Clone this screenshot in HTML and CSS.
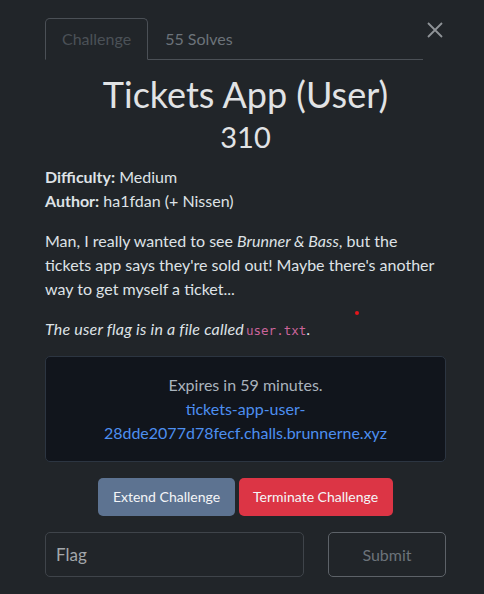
FILE: index.html
```html
<!DOCTYPE html>
<html>
<head>
<meta charset="utf-8">
<link rel="stylesheet" href="styles.css">
</head>
<body>
<div class="modal">
  <div class="header">
    <nav class="tabs">
      <span class="tab active">Challenge</span>
      <span class="tab">55 Solves</span>
    </nav>
    <button class="close" aria-label="Close">
      <svg width="16" height="16" viewBox="0 0 16 16"><path d="M1 1L15 15M15 1L1 15" stroke="#8f9397" stroke-width="1.8" fill="none"/></svg>
    </button>
  </div>
  <h2 class="title">Tickets App (User)</h2>
  <h3 class="points">310</h3>
  <div class="meta">
    <div><b>Difficulty:</b> Medium</div>
    <div><b>Author:</b> ha1fdan (+ Nissen)</div>
  </div>
  <p class="desc">Man, I really wanted to see <i>Brunner &amp; Bass</i>, but the tickets app says they're sold out! Maybe there's another way to get myself a ticket...</p>
  <p class="desc"><i class="note">The user flag is in a file called</i><code>user.txt</code>.</p>
  <div class="instance">
    <div class="expires">Expires in 59 minutes.</div>
    <a class="link" href="#">tickets-app-user-<br>28dde2077d78fecf.challs.brunnerne.xyz</a>
  </div>
  <div class="actions">
    <button class="btn extend">Extend Challenge</button>
    <button class="btn terminate">Terminate Challenge</button>
  </div>
  <form class="submit-row">
    <input class="flag" type="text" placeholder="Flag">
    <button class="submit" type="button">Submit</button>
  </form>
  <span class="dot"></span>
</div>
</body>
</html>
```
FILE: styles.css
```css
html, body {
  margin: 0;
  padding: 0;
  background: #212529;
}
body {
  font-family: Lato, "Open Sans", sans-serif;
  color: #dee2e6;
  font-size: 16px;
  line-height: 24px;
}
.modal {
  width: 484px;
  height: 594px;
  box-sizing: border-box;
  padding: 18px 38px 0 45px;
  position: relative;
}
.header {
  display: flex;
  align-items: flex-start;
}
.tabs {
  flex: 1;
  display: flex;
  border-bottom: 1px solid #4b5056;
}
.tab {
  padding: 8px 16px;
  font-size: 16px;
  line-height: 24px;
  color: #6c737a;
  border: 1px solid transparent;
  border-top-left-radius: 5px;
  border-top-right-radius: 5px;
  margin-bottom: -1px;
}
.tab.active {
  color: #4b5157;
  border-color: #4b5056;
  border-bottom-color: #212529;
}
.close {
  background: none;
  border: 0;
  padding: 0;
  margin: 4px 3px 0 4px;
  width: 16px;
  height: 16px;
  display: flex;
}
.title {
  margin: 12px 0 0;
  text-align: center;
  font-size: 36px;
  line-height: 44px;
  font-weight: 400;
  color: #e1e3e5;
}
.points {
  margin: 4px 0 0;
  text-align: center;
  font-size: 29px;
  line-height: 1.2;
  font-weight: 400;
  color: #e1e3e5;
}
.meta {
  margin-top: 10px;
}
.meta b {
  font-weight: 700;
}
.desc {
  margin: 16px 0 0;
}
.note {
  letter-spacing: 0.2px;
}
code {
  font-family: "DejaVu Sans Mono", monospace;
  font-size: 12.5px;
  line-height: 1;
  color: #c9649a;
  margin-left: 2px;
}
.dot {
  position: absolute;
  left: 355px;
  top: 311px;
  width: 4px;
  height: 4px;
  border-radius: 50%;
  background: #e4161b;
}
.instance {
  margin-top: 15px;
  background: #11151c;
  border: 1px solid #2c3541;
  border-radius: 5px;
  padding: 16px;
  text-align: center;
}
.expires {
  color: #aab3bd;
}
.link {
  color: #4d8ff0;
  text-decoration: none;
}
.actions {
  margin-top: 16px;
  display: flex;
  justify-content: center;
  gap: 4px;
}
.btn {
  height: 38px;
  border: 0;
  border-radius: 5px;
  padding: 0 14.5px;
  font-family: Lato, sans-serif;
  font-size: 14px;
  color: #f4f5f7;
}
.extend {
  background: #5d7391;
}
.terminate {
  background: #dc3545;
}
.submit-row {
  margin: 16px 0 0;
  display: flex;
  gap: 24px;
}
.flag {
  width: 259px;
  height: 45px;
  box-sizing: border-box;
  background: #212529;
  border: 1px solid #3f444a;
  border-radius: 5px;
  padding: 0 10px;
  font-family: Lato, sans-serif;
  font-size: 17px;
  color: #dee2e6;
}
.flag::placeholder {
  color: #a3a7ab;
}
.submit {
  width: 118px;
  height: 45px;
  background: transparent;
  border: 1px solid #5d6268;
  border-radius: 5px;
  font-family: Lato, sans-serif;
  font-size: 16px;
  color: #6c737a;
}
```
